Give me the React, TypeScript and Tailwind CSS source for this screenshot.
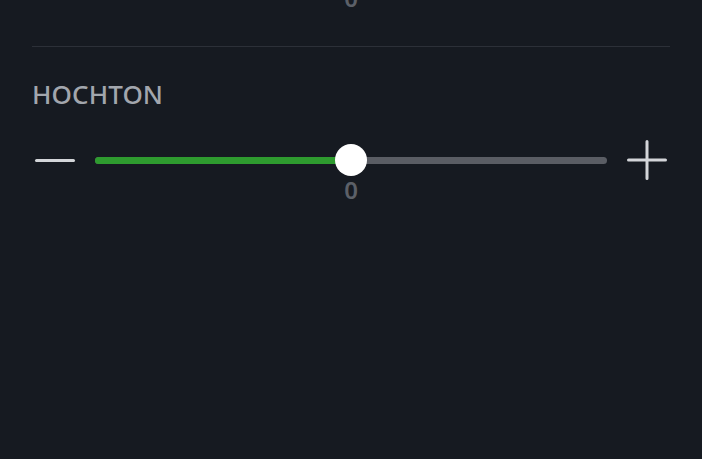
import React from 'react';

const font = { fontFamily: '"Noto Sans", "Open Sans", sans-serif' };

function Plus() {
  return (
    <svg width="40" height="40" viewBox="0 0 40 40" className="shrink-0">
      <path d="M20 1.5v37M1.5 20h37" stroke="#d3d5d9" strokeWidth="3" strokeLinecap="round" />
    </svg>
  );
}

function ToneSlider({ label, value }: { label: string; value: number }) {
  const pct = ((value + 10) / 20) * 100;
  return (
    <div className="pt-[31px]">
      <div className="text-[26px] leading-[32px] font-medium text-[#a2a6ad] tracking-[0.1px]">{label}</div>
      <div className="mt-[30px] flex items-center h-[40px]">
        <div className="ml-[3px] w-[40px] h-[3px] rounded-full bg-[#d3d5d9] shrink-0" />
        <div className="relative flex-1 mx-[20px] h-[7px] rounded-full bg-[#5a5d64]">
          <div className="h-full rounded-full bg-[#2e9b2f]" style={{ width: `${pct}%` }} />
          <div
            className="absolute top-1/2 w-[32px] h-[32px] -translate-x-1/2 -translate-y-1/2 rounded-full bg-white"
            style={{ left: `${pct}%` }}
          />
        </div>
        <div className="mr-[3px]">
          <Plus />
        </div>
      </div>
      <div className="-mt-[5px] ml-[63px] mr-[63px] text-center text-[24px] leading-[30px] font-semibold text-[#5c6068]">
        {value}
      </div>
    </div>
  );
}

export default function App() {
  return (
    <div className="w-full h-screen bg-[#161a21] overflow-hidden px-8" style={font}>
      <div className="-mt-[17px] ml-[63px] mr-[63px] text-center text-[24px] leading-[30px] font-semibold text-[#5c6068]">
        0
      </div>
      <div className="mt-[33px] border-t border-[#2c3038]" />
      <ToneSlider label="HOCHTON" value={0} />
    </div>
  );
}
